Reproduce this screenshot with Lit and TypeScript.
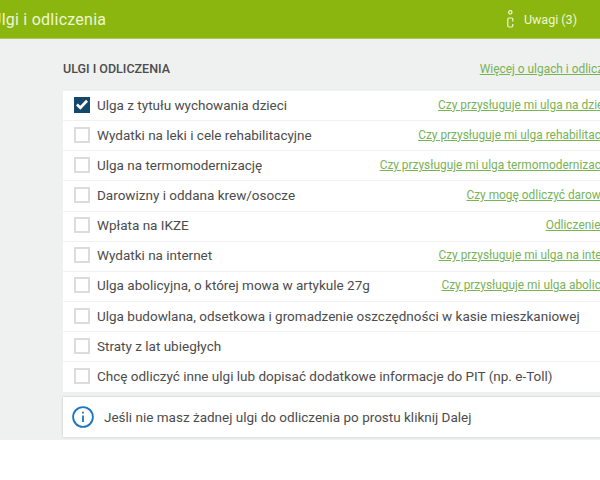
import { LitElement, html, css } from "lit";
import { customElement } from "lit/decorators.js";

const rows: [string, string, boolean][] = [
  ["Ulga z tytułu wychowania dzieci", "Czy przysługuje mi ulga na dziecko?", true],
  ["Wydatki na leki i cele rehabilitacyjne", "Czy przysługuje mi ulga rehabilitacyjną?", false],
  ["Ulga na termomodernizację", "Czy przysługuje mi ulga termomodernizacyjną?", false],
  ["Darowizny i oddana krew/osocze", "Czy mogę odliczyć darowiznę?", false],
  ["Wpłata na IKZE", "Odliczenie IKZE", false],
  ["Wydatki na internet", "Czy przysługuje mi ulga na internet?", false],
  ["Ulga abolicyjna, o której mowa w artykule 27g", "Czy przysługuje mi ulga abolicyjną?", false],
  ["Ulga budowlana, odsetkowa i gromadzenie oszczędności w kasie mieszkaniowej", "", false],
  ["Straty z lat ubiegłych", "", false],
  ["Chcę odliczyć inne ulgi lub dopisać dodatkowe informacje do PIT (np. e-Toll)", "", false],
];

@customElement("app-root")
export class AppRoot extends LitElement {
  static styles = css`
    :host { display: block; width: 600px; height: 480px; overflow: hidden; background: #fff; font-family: Roboto, "Liberation Sans", sans-serif; color: #4c4c4c; }
    .top { height: 39px; box-sizing: border-box; background: #8ab60f; border-bottom: 1px solid #a9cb55; display: flex; align-items: center; justify-content: space-between; color: #eef6d6; overflow: hidden; }
    .title { font-size: 16px; margin-left: -9px; letter-spacing: .25px; }
    .notes { display: flex; align-items: center; gap: 10px; font-size: 12.5px; margin-right: 23px; }
    .notes svg { display: block; }
    .main { width: 700px; height: 401px; background: #eff0f0; padding: 22px 0 0 63px; box-sizing: border-box; }
    .head { width: 575px; display: flex; justify-content: space-between; align-items: baseline; height: 30px; box-sizing: border-box; }
    .h { font-size: 12.5px; font-weight: 500; color: #4c4c4c; }
    a { color: #78b356; text-decoration: underline; font-size: 11.9px; white-space: nowrap; }
    .list { width: 577px; background: #fff; }
    .row { height: 30.14px; box-sizing: border-box; display: flex; align-items: center; justify-content: space-between; padding: 0 12px 1.7px 11px; border-bottom: 1px solid #f1f1f1; font-size: 13.5px; }
    .row:last-child { border-bottom: 0; }
    .l { display: flex; align-items: center; gap: 7px; white-space: nowrap; }
    .cb { width: 16px; height: 16px; box-sizing: border-box; background: #fff; border: 2px solid #dcdcdc; display: flex; align-items: center; justify-content: center; }
    .cb.on { background: #13486b; border-color: #13486b; }
    .info { width: 577px; margin-top: 5px; height: 40px; box-sizing: border-box; background: #fff; box-shadow: 0 0 2px #bbb; display: flex; align-items: center; gap: 10px; padding-left: 9px; font-size: 13.5px; }
  `;
  render() {
    return html`
      <div class="top">
        <span class="title">Ulgi i odliczenia</span>
        <span class="notes">
          <svg width="7" height="18" viewBox="0 0 7 18" fill="none" stroke="currentColor" stroke-width="1.2"><circle cx="3.3" cy="2.3" r="1.7"/><path d="M5.8 11.5V9.2C5.8 8.4 5.4 8 4.6 8H2C1.2 8 .8 8.4.8 9.2v6.6C.8 16.6 1.2 17 2 17h2.6c.8 0 1.2-.4 1.2-1.2V14"/></svg>
          Uwagi (3)
        </span>
      </div>
      <div class="main">
        <div class="head"><span class="h">ULGI I ODLICZENIA</span><a href="#">Więcej o ulgach i odliczeniach</a></div>
        <div class="list">
          ${rows.map(([t, l, on]) => html`
            <div class="row">
              <span class="l"><span class="cb ${on ? "on" : ""}">${on ? html`<svg width="13" height="11" viewBox="0 0 13 11" fill="none" stroke="#fff" stroke-width="3"><path d="M1 5.5l3.7 3.5L12 1.5"/></svg>` : ""}</span>${t}</span>
              ${l ? html`<a href="#">${l}</a>` : ""}
            </div>`)}
        </div>
        <div class="info">
          <svg width="22" height="22" viewBox="0 0 22 22" fill="none" stroke="#1b74c4" stroke-width="1.8"><circle cx="11" cy="11" r="9.9"/><path d="M11 9.5V16M11 5.8v1.8"/></svg>
          Jeśli nie masz żadnej ulgi do odliczenia po prostu kliknij Dalej
        </div>
      </div>
    `;
  }
}
